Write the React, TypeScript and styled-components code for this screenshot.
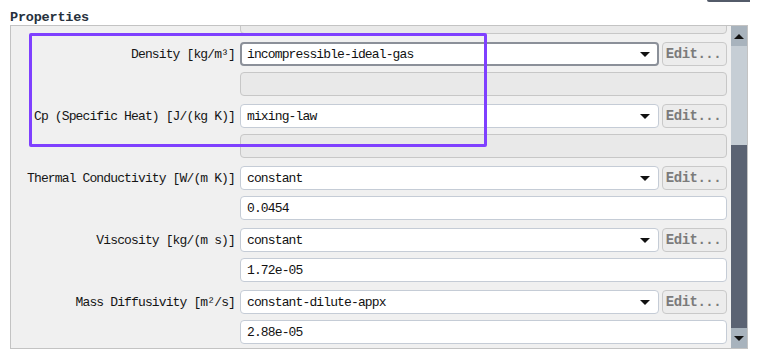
import React from "react";
import styled, { createGlobalStyle } from "styled-components";

const Global = createGlobalStyle`
  html, body { margin: 0; padding: 0; background: #ffffff; }
  body { font-family: "Liberation Mono", "DejaVu Sans Mono", monospace; }
`;

const Page = styled.div`
  position: relative;
  width: 757px;
  height: 354px;
  box-sizing: border-box;
  padding: 0 9px 0 10px;
  overflow: hidden;
`;

const Header = styled.div`
  height: 25px;
  display: flex;
  justify-content: space-between;
  align-items: flex-start;
`;

const Title = styled.div`
  margin-top: 10px;
  font-family: "Liberation Mono", monospace;
  font-weight: bold;
  font-size: 13.5px;
  line-height: 16px;
  letter-spacing: -0.2px;
  color: #27313d;
`;

const TopEdge = styled.div`
  width: 43px;
  height: 2px;
  margin-right: -2px;
  background: #535b69;
  border-bottom-left-radius: 2px;
`;

const Panel = styled.div`
  height: 324px;
  box-sizing: border-box;
  border: 1px solid #c3c3c3;
  background: #f0f0f0;
  display: flex;
`;

const Content = styled.div`
  flex: 1;
  overflow: hidden;
  padding-right: 4px;
  display: flex;
  flex-direction: column;
  gap: 8px;
`;

const Block = styled.div`
  display: grid;
  grid-template-columns: 1fr 487px;
  column-gap: 5px;
  row-gap: 6px;
  align-items: center;
`;

const Label = styled.div`
  text-align: right;
  font-size: 13px;
  letter-spacing: -0.87px;
  color: #151515;
  white-space: nowrap;
`;

const Controls = styled.div`
  display: flex;
  gap: 3px;
`;

const Combo = styled.div<{ $focused?: boolean }>`
  flex: 1;
  height: 24px;
  box-sizing: border-box;
  background: #ffffff;
  border: ${(p) => (p.$focused ? "2px solid #8b9099" : "1px solid #c5ccd6")};
  border-radius: 4px;
  display: flex;
  align-items: center;
  padding: ${(p) => (p.$focused ? "0 7px 0 5px" : "0 8px 0 6px")};
  font-size: 13px;
  letter-spacing: -0.87px;
  color: #111;
`;

const ComboText = styled.span`
  flex: 1;
`;

const Arrow = styled.span<{ $up?: boolean }>`
  width: 0;
  height: 0;
  border-left: 5px solid transparent;
  border-right: 5px solid transparent;
  ${(p) => (p.$up ? "border-bottom: 5px solid #111;" : "border-top: 5px solid #111;")}
`;

const EditButton = styled.div`
  width: 65px;
  height: 24px;
  box-sizing: border-box;
  border: 1px solid #c9c9c9;
  border-radius: 4px;
  background: #ececec;
  display: flex;
  align-items: center;
  justify-content: center;
  padding-right: 2px;
  font-family: "Liberation Mono", monospace;
  font-weight: bold;
  font-size: 14px;
  letter-spacing: -0.5px;
  color: #7b7b7b;
`;

const Field = styled.div<{ $disabled?: boolean }>`
  grid-column: 2;
  height: 24px;
  box-sizing: border-box;
  border: 1px solid ${(p) => (p.$disabled ? "#c7c7c7" : "#c5ccd6")};
  border-radius: 4px;
  background: ${(p) => (p.$disabled ? "#e9e9e9" : "#ffffff")};
  display: flex;
  align-items: center;
  padding-left: 6px;
  font-size: 13px;
  letter-spacing: -0.87px;
  color: #111;
`;

const LeadBlock = styled(Block)`
  margin-top: -16px;
`;

const Scrollbar = styled.div`
  width: 16px;
  display: flex;
  flex-direction: column;
  background: #c6ced5;
`;

const ScrollButton = styled.div`
  height: 20px;
  background: #a8b3bd;
  display: flex;
  align-items: center;
  justify-content: center;
`;

const Track = styled.div`
  flex: 1;
  display: flex;
  flex-direction: column;
`;

const TrackSpace = styled.div`
  height: 99px;
`;

const Thumb = styled.div`
  flex: 1;
  background: #5b6373;
`;

const Highlight = styled.div`
  position: absolute;
  left: 29px;
  top: 33px;
  width: 458px;
  height: 114px;
  box-sizing: border-box;
  border: 3px solid #7f40ff;
  border-radius: 2px;
  pointer-events: none;
`;

type Prop = {
  label: string;
  method: string;
  value: string;
  disabled?: boolean;
  focused?: boolean;
};

const props: Prop[] = [
  { label: "Density [kg/m³]", method: "incompressible-ideal-gas", value: "", disabled: true, focused: true },
  { label: "Cp (Specific Heat) [J/(kg K)]", method: "mixing-law", value: "", disabled: true },
  { label: "Thermal Conductivity [W/(m K)]", method: "constant", value: "0.0454" },
  { label: "Viscosity [kg/(m s)]", method: "constant", value: "1.72e-05" },
  { label: "Mass Diffusivity [m²/s]", method: "constant-dilute-appx", value: "2.88e-05" },
];

export default function App() {
  return (
    <>
      <Global />
      <Page>
        <Header>
          <Title>Properties</Title>
          <TopEdge />
        </Header>
        <Panel>
          <Content>
            <LeadBlock>
              <Field $disabled />
            </LeadBlock>
            {props.map((p, i) => (
              <Block key={i}>
                <Label>{p.label}</Label>
                <Controls>
                  <Combo $focused={p.focused}>
                    <ComboText>{p.method}</ComboText>
                    <Arrow />
                  </Combo>
                  <EditButton>Edit...</EditButton>
                </Controls>
                <Field $disabled={p.disabled}>{p.value}</Field>
              </Block>
            ))}
          </Content>
          <Scrollbar>
            <ScrollButton>
              <Arrow $up />
            </ScrollButton>
            <Track>
              <TrackSpace />
              <Thumb />
            </Track>
            <ScrollButton>
              <Arrow />
            </ScrollButton>
          </Scrollbar>
        </Panel>
        <Highlight />
      </Page>
    </>
  );
}
